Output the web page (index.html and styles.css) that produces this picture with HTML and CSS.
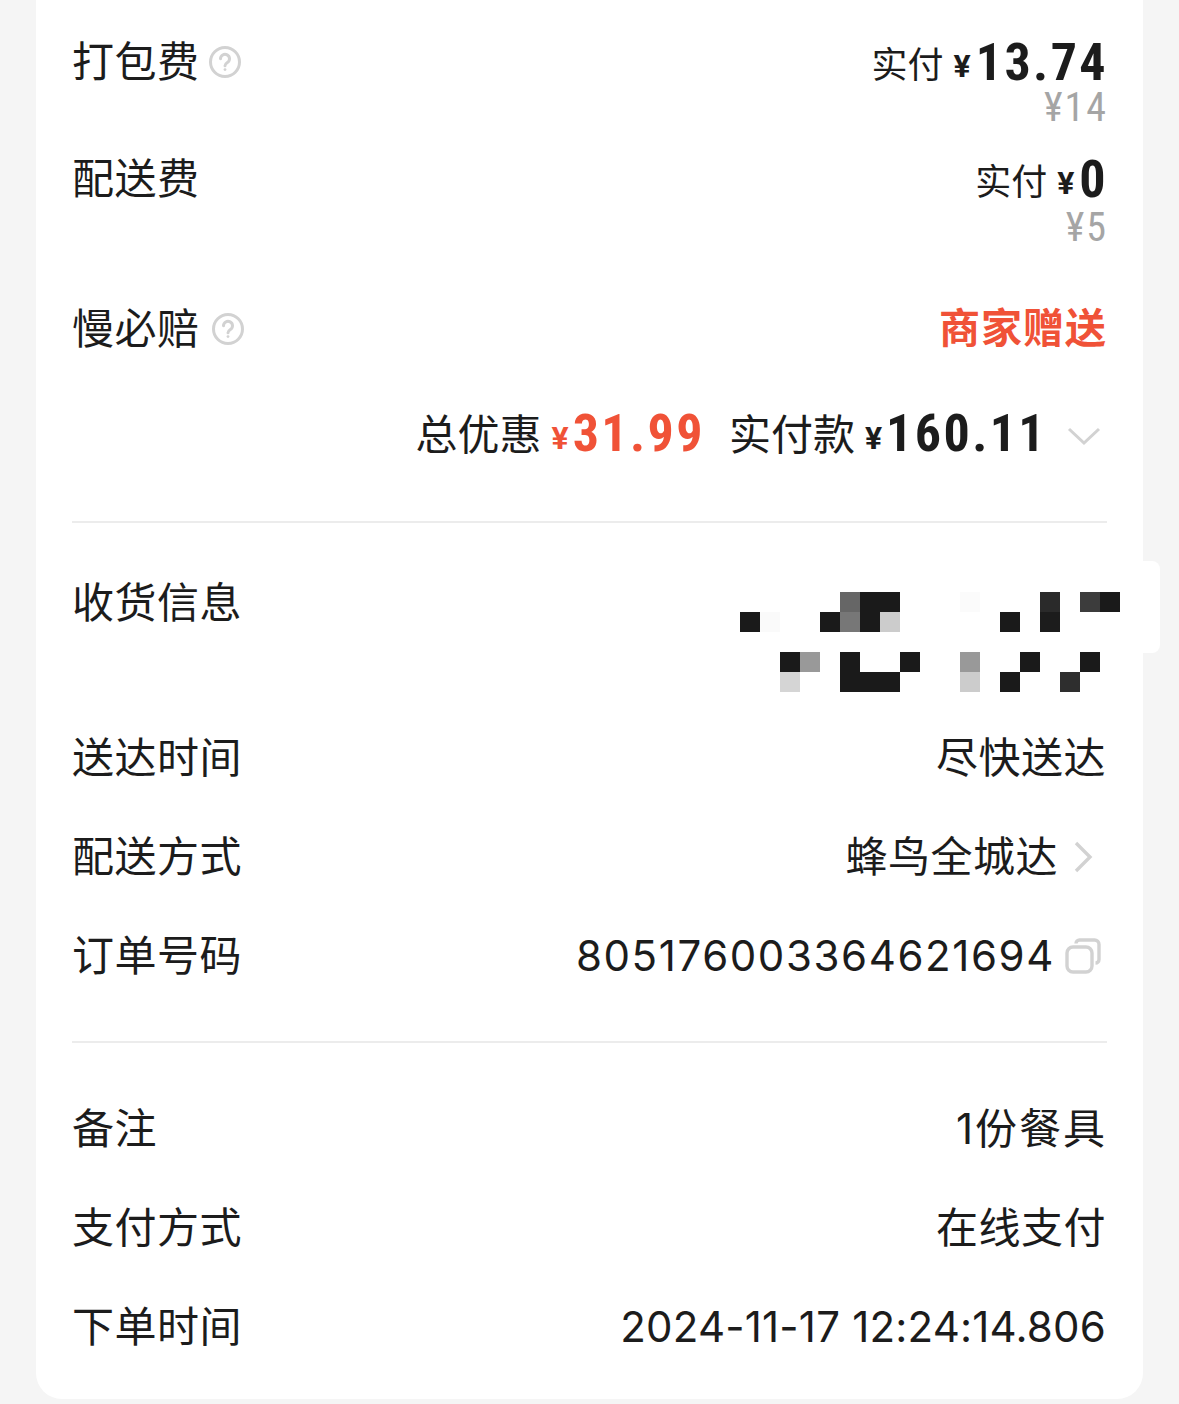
FILE: index.html
```html
<!DOCTYPE html>
<html lang="zh-CN">
<head>
<meta charset="utf-8">
<title>订单详情</title>
<link rel="stylesheet" href="styles.css">
</head>
<body>
<main class="card">
  <section class="fees">
    <div class="row fee-row first">
      <div class="label">打包费<svg class="help" viewBox="0 0 32 32"><circle cx="16" cy="16" r="14.5"/><path d="M11.5 12.8a4.500 4.500 0 1 1 6.900 3.800c-1.500 1-2.400 1.800-2.400 3.200"/><circle class="dot" cx="16" cy="23.600" r="1.400"/></svg></div>
      <div class="fee">
        <div class="paid"><span class="paid-label">实付</span><span class="yen">¥</span><span class="amount">13.74</span></div>
        <div class="orig">¥14</div>
      </div>
    </div>
    <div class="row fee-row second">
      <div class="label">配送费</div>
      <div class="fee">
        <div class="paid"><span class="paid-label">实付</span><span class="yen">¥</span><span class="amount">0</span></div>
        <div class="orig orig-b">¥5</div>
      </div>
    </div>
    <div class="row slow">
      <div class="label">慢必赔<svg class="help" viewBox="0 0 32 32"><circle cx="16" cy="16" r="14.5"/><path d="M11.5 12.8a4.500 4.500 0 1 1 6.900 3.800c-1.500 1-2.400 1.800-2.400 3.200"/><circle class="dot" cx="16" cy="23.600" r="1.400"/></svg></div>
      <div class="gift">商家赠送</div>
    </div>
    <div class="total">
      <span class="t-label">总优惠</span><span class="t-yen red">¥</span><span class="t-num red">31.99</span>
      <span class="t-label pay">实付款</span><span class="t-yen">¥</span><span class="t-num">160.11</span>
      <svg class="chev-down" viewBox="0 0 34 20"><path d="M2 3l15 14L32 3"/></svg>
    </div>
  </section>

  <section class="info">
    <div class="row addr">
      <div class="label">收货信息</div>
      <div class="patch"></div>
      <div class="mosaic"></div>
    </div>
    <div class="row line"><div class="label">送达时间</div><div class="value">尽快送达</div></div>
    <div class="row line"><div class="label">配送方式</div><div class="value">蜂鸟全城达<svg class="chev-right" viewBox="0 0 20 34"><path d="M3 3l14 14L3 31"/></svg></div></div>
    <div class="row line"><div class="label">订单号码</div><div class="value num-id">805176003364621694<svg class="copy" viewBox="0 0 36 36"><path class="back" d="M11 5.500c0-2 1.500-3.500 3.500-3.500h15c2.500 0 4.500 2 4.500 4.500v15c0 2-1.500 3.500-3.500 3.500"/><rect x="2" y="9" width="25" height="25" rx="6"/></svg></div></div>
  </section>

  <section class="extra">
    <div class="row line"><div class="label">备注</div><div class="value num-cut">1份餐具</div></div>
    <div class="row line"><div class="label">支付方式</div><div class="value">在线支付</div></div>
    <div class="row line"><div class="label">下单时间</div><div class="value num-date">2024-11-17 12:24:14.806</div></div>
  </section>
</main>
<script src="mosaic.js"></script>
</body>
</html>
```

FILE: mosaic.js
```js
var cells = [
  [0,5,'#666'],[0,6,'#1a1a1a'],[0,7,'#1a1a1a'],[0,11,'#fbfbfb'],[0,15,'#2a2a2a'],[0,17,'#3c3c3c'],[0,18,'#1a1a1a'],
  [1,0,'#1a1a1a'],[1,1,'#fafafa'],[1,4,'#1a1a1a'],[1,5,'#777'],[1,6,'#1a1a1a'],[1,7,'#ccc'],[1,13,'#1a1a1a'],[1,15,'#1c1c1c'],
  [3,2,'#1a1a1a'],[3,3,'#999'],[3,5,'#1a1a1a'],[3,8,'#1a1a1a'],[3,11,'#999'],[3,14,'#1a1a1a'],[3,17,'#1a1a1a'],
  [4,2,'#d5d5d5'],[4,5,'#1a1a1a'],[4,6,'#1a1a1a'],[4,7,'#1a1a1a'],[4,11,'#ccc'],[4,13,'#1a1a1a'],[4,16,'#2e2e2e']
];
var m = document.querySelector('.mosaic');
cells.forEach(function (c) {
  var e = document.createElement('i');
  e.style.gridArea = (c[0] + 1) + '/' + (c[1] + 1);
  e.style.background = c[2];
  m.appendChild(e);
});
```

FILE: styles.css
```css
* { box-sizing: border-box; }
html, body { margin: 0; padding: 0; }
body {
  width: 1179px;
  height: 1404px;
  overflow: hidden;
  background: #f5f5f5;
  color: #1c1c1c;
  font-family: Roboto, "Noto Sans CJK SC", sans-serif;
}
.card {
  width: 1107px;
  height: 1399px;
  margin-left: 36px;
  padding: 0 36px;
  background: #fff;
  border-radius: 0 0 26px 26px;
}
.row { display: flex; justify-content: space-between; align-items: center; }
.label, .value {
  display: flex;
  align-items: center;
  font-family: Inter, "Noto Sans CJK SC", sans-serif;
  font-size: 42px;
  line-height: 60px;
  letter-spacing: 0.5px;
  white-space: nowrap;
}
.label { margin-left: 0; }
.value { margin-right: 1px; }
.num-id { letter-spacing: 1.6px; }
.num-date { letter-spacing: 0.2px; }
.num-cut { letter-spacing: 2px; margin-right: 0; }
.help { width: 32px; height: 32px; margin-left: 9px; fill: none; stroke: #d2d2d2; stroke-width: 3; stroke-linecap: round; }
.slow .help { margin-left: 12px; }
.help .dot { fill: #d2d2d2; stroke: none; }
.fees { height: 523px; border-bottom: 2px solid #ececec; }
.fee-row { align-items: flex-start; }
.first { height: 150px; padding-top: 33px; }
.first .label { margin-top: -1px; }
.second { height: 146px; }
.second .label { margin-top: -1px; }
.fee { text-align: right; margin-right: -1px; }
.paid { display: flex; align-items: baseline; justify-content: flex-end; height: 60px; line-height: 60px; }
.paid-label { font-size: 36px; transform: translateY(-2px); }
.yen { font-size: 32px; font-weight: 700; margin: 0 5px 0 10px; transform: translateY(-3px); }
.amount { font-size: 52px; font-weight: 700; letter-spacing: 2.4px; font-stretch: condensed; }
.orig { margin-top: -7px; font-size: 40px; line-height: 44px; color: #a5a5a5; font-stretch: condensed; letter-spacing: 2px; }
.orig-b { margin-top: 0; line-height: 36px; }
.slow { height: 68px; padding-bottom: 2px; }
.gift { font-size: 41px; font-weight: 700; color: #f05237; line-height: 60px; letter-spacing: 1px; }
.total { display: flex; align-items: baseline; justify-content: flex-end; margin-top: 40px; height: 60px; line-height: 60px; }
.t-label { font-size: 42px; letter-spacing: 0; transform: translateY(-1px); }
.pay { margin-left: 24px; }
.t-yen { font-size: 32px; font-weight: 700; margin: 0 4px 0 10px; transform: translateY(-2px); }
.t-num { font-size: 52px; font-weight: 700; letter-spacing: 2.4px; font-stretch: condensed; }
.red { color: #f05237; }
.chev-down { width: 34px; height: 20px; margin-left: 20px; margin-right: 6px; margin-top: 4px; fill: none; stroke: #d2d2d2; stroke-width: 3; align-self: center; }
.info { height: 520px; border-bottom: 2px solid #ececec; padding-top: 50px; position: relative; }
.addr { height: 137px; align-items: flex-start; }
.line { height: 99px; padding-bottom: 4px; }
.mosaic {
  display: grid;
  grid-template-columns: repeat(19, 20px);
  grid-template-rows: repeat(5, 20px);
  margin: 19px -13px 0 0;
  position: relative;
}
.patch {
  position: absolute;
  right: -53px;
  top: 38px;
  width: 60px;
  height: 92px;
  background: #fff;
  border-radius: 0 8px 8px 0;
}
.chev-right { width: 20px; height: 34px; margin-left: 15px; margin-right: 13px; fill: none; stroke: #d2d2d2; stroke-width: 3.4; }
.copy { width: 36px; height: 36px; margin-left: 10px; margin-right: 5px; fill: none; stroke: #d2d2d2; stroke-width: 3.4; }
.extra { padding-top: 38px; }
```
